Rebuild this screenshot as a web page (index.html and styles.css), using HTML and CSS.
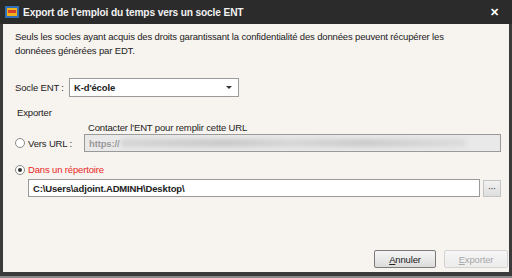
FILE: index.html
```html
<!doctype html>
<html lang="fr">
<head>
    <meta charset="utf-8">
    <title>Export de l'emploi du temps vers un socle ENT</title>
    <link rel="stylesheet" href="styles.css">
</head>
<body>
    <div class="dialog">
        <div class="titlebar">
            <svg class="app-icon" viewBox="0 0 14 12" width="14" height="12">
                <rect x="0" y="0" width="14" height="12" fill="#2f6fb8"/>
                <rect x="2" y="2" width="10" height="8" fill="#f0b21c"/>
                <rect x="3" y="4" width="8" height="3" fill="#d9402a"/>
            </svg>
            <span class="title">Export de l'emploi du temps vers un socle ENT</span>
            <span class="close">&#x2715;</span>
        </div>

        <div class="content">
            <p class="intro">Seuls les socles ayant acquis des droits garantissant la confidentialité des données peuvent récupérer les donnéees générées par EDT.</p>

            <div class="socle-row">
                <span class="label">Socle ENT :</span>
                <div class="select">
                    <span class="select-value">K-d'école</span>
                    <span class="select-arrow"></span>
                </div>
            </div>

            <div class="section-title">Exporter</div>

            <div class="url-hint">Contacter l'ENT pour remplir cette URL</div>
            <div class="url-row">
                <span class="radio"></span>
                <span class="radio-label">Vers URL :</span>
                <div class="field field-disabled">
                    <span class="field-text">https://</span>
                    <span class="blurred"></span>
                </div>
            </div>

            <div class="dir-row">
                <span class="radio radio-checked"></span>
                <span class="radio-label red">Dans un répertoire</span>
            </div>
            <div class="path-row">
                <div class="field">
                    <span class="field-text bold">C:\Users\adjoint.ADMINH\Desktop\</span>
                </div>
                <span class="browse">&middot;&middot;&middot;</span>
            </div>
        </div>

        <div class="footer">
            <span class="button"><u>A</u>nnuler</span>
            <span class="button button-disabled"><u>E</u>xporter</span>
        </div>
    </div>
</body>
</html>
```

FILE: styles.css
```css
html, body {
    margin: 0;
    padding: 0;
}

body {
    width: 512px;
    height: 278px;
    background-color: #8a8a8a;
    font-family: 'Liberation Sans', Arial, sans-serif;
    font-size: 9.5px;
    letter-spacing: -0.15px;
    color: #222;
}

.dialog {
    box-sizing: border-box;
    width: 512px;
    height: 276px;
    display: flex;
    flex-direction: column;
    background-color: #f7f3ef;
    border: 3px solid #3b3b3b;
    border-top: 0;
    border-bottom-width: 4px;
}

.titlebar {
    height: 24px;
    flex: none;
    display: flex;
    align-items: center;
    background-color: #2b2b2b;
    margin: 0 -3px;
    padding: 0 8px 0 5px;
}

.app-icon {
    flex: none;
    margin-right: 4px;
}

.title {
    flex: 1;
    color: #f2f2f2;
    font-weight: bold;
    font-size: 10.2px;
    letter-spacing: -0.15px;
}

.close {
    color: #fff;
    font-weight: bold;
    font-size: 11px;
    margin-right: 5px;
}

.content {
    flex: 1;
    padding: 6px 8px 0 12px;
}

.intro {
    margin: 0;
    line-height: 14px;
    width: 470px;
}

.socle-row {
    display: flex;
    align-items: center;
    margin-top: 20px;
}

.label {
    width: 54px;
}

.select {
    box-sizing: border-box;
    width: 170px;
    height: 19px;
    display: flex;
    align-items: center;
    justify-content: space-between;
    background: #fff;
    border: 1px solid #9a9a9a;
    padding: 0 6px 0 4px;
}

.select-value {
    font-weight: bold;
}

.select-arrow {
    width: 0;
    height: 0;
    border-left: 3px solid transparent;
    border-right: 3px solid transparent;
    border-top: 3px solid #333;
}

.section-title {
    margin-top: 10px;
    padding-left: 2px;
}

.url-hint {
    margin-top: 4px;
    padding-left: 73px;
}

.url-row,
.dir-row,
.path-row {
    display: flex;
    align-items: center;
}

.url-row {
    margin-top: 1px;
}

.radio {
    box-sizing: border-box;
    width: 10px;
    height: 10px;
    border-radius: 50%;
    border: 1px solid #8a8a8a;
    background: #fff;
    margin: 0 3px 0 0;
    flex: none;
    position: relative;
}

.radio-checked::after {
    content: '';
    position: absolute;
    top: 2px;
    left: 2px;
    width: 4px;
    height: 4px;
    border-radius: 50%;
    background: #333;
}

.radio-label {
    width: 56px;
}

.red {
    color: #e8271e;
    width: auto;
}

.field {
    box-sizing: border-box;
    flex: 1;
    height: 18px;
    display: flex;
    align-items: center;
    background: #fff;
    border: 1px solid #9a9a9a;
    padding: 0 4px;
    overflow: hidden;
}

.field-disabled {
    background: #e9e9e9;
}

.field-disabled .field-text {
    color: #9a9a9a;
    font-weight: bold;
}

.blurred {
    flex: 1;
    height: 8px;
    margin: 0 30px 0 2px;
    background: linear-gradient(90deg, #d5d5d5, #c9c9c9 30%, #d6d6d6 50%, #cbcbcb 70%, #dcdcdc);
    filter: blur(2px);
}

.bold {
    font-weight: bold;
}

.dir-row {
    margin-top: 12px;
}

.path-row {
    margin-top: 4px;
    padding-left: 13px;
    gap: 3px;
}

.browse {
    box-sizing: border-box;
    width: 18px;
    height: 17px;
    border: 1px solid #c4c4c4;
    background: linear-gradient(#f2f2f2, #dedede);
    display: flex;
    align-items: center;
    justify-content: center;
    color: #555;
    font-weight: bold;
    font-size: 8px;
}

.footer {
    display: flex;
    justify-content: flex-end;
    gap: 8px;
    padding: 0 1px 4px 0;
}

.button {
    box-sizing: border-box;
    width: 62px;
    height: 18px;
    display: flex;
    align-items: center;
    justify-content: center;
    border: 1px solid #7a7a7a;
    border-radius: 2px;
    background: linear-gradient(#f5f5f5, #dcdcdc);
}

.button u {
    text-decoration: underline;
}

.button-disabled {
    width: 64px;
    border-color: #d3d3d3;
    color: #a8a8a8;
    background: linear-gradient(#f5f5f5, #ececec);
}
```
